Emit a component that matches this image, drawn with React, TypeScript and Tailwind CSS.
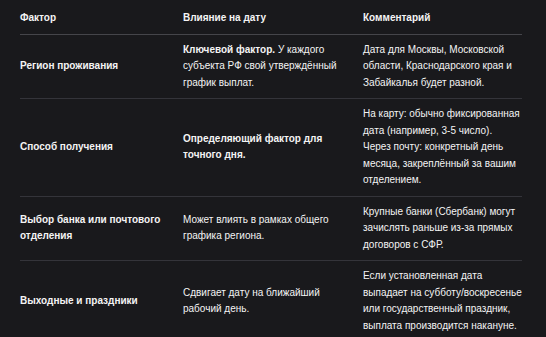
const rows = [
  {
    factor: 'Регион проживания',
    impact: (
      <>
        <strong className="font-bold">Ключевой фактор.</strong> У каждого субъекта РФ свой утверждённый график выплат.
      </>
    ),
    comment: 'Дата для Москвы, Московской области, Краснодарского края и Забайкалья будет разной.',
  },
  {
    factor: 'Способ получения',
    impact: <strong className="font-bold">Определяющий фактор для точного дня.</strong>,
    comment: (
      <>
        На карту: обычно фиксированная дата (например, 3-5 число).
        <br />
        Через почту: конкретный день месяца, закреплённый за вашим отделением.
      </>
    ),
  },
  {
    factor: 'Выбор банка или почтового отделения',
    impact: 'Может влиять в рамках общего графика региона.',
    comment: 'Крупные банки (Сбербанк) могут зачислять раньше из-за прямых договоров с СФР.',
  },
  {
    factor: 'Выходные и праздники',
    impact: 'Сдвигает дату на ближайший рабочий день.',
    comment:
      'Если установленная дата выпадает на субботу/воскресенье или государственный праздник, выплата производится накануне.',
  },
]

export default function App() {
  return (
    <div className="min-h-[337px] w-[546px] overflow-hidden bg-[#19191c] pl-5 pt-[3px] font-['Liberation_Sans',sans-serif] text-[10px] leading-[16.5px] text-[#f4f4f4]">
      <table className="w-[502px] table-fixed border-collapse text-left">
        <colgroup>
          <col className="w-[163px]" />
          <col className="w-[180px]" />
          <col className="w-[159px]" />
        </colgroup>
        <thead>
          <tr className="border-b border-[#45454a]">
            <th className="py-[7px] pr-2 font-bold">Фактор</th>
            <th className="py-[7px] pr-2 font-bold">Влияние на дату</th>
            <th className="py-[7px] font-bold">Комментарий</th>
          </tr>
        </thead>
        <tbody>
          {rows.map((row, i) => (
            <tr key={i} className="border-b border-[#34343a] last:border-b-0">
              <td className="py-[7px] pr-3 align-middle font-bold">{row.factor}</td>
              <td className="py-[7px] pr-3 align-middle">{row.impact}</td>
              <td className="py-[7px] align-middle">{row.comment}</td>
            </tr>
          ))}
        </tbody>
      </table>
    </div>
  )
}
